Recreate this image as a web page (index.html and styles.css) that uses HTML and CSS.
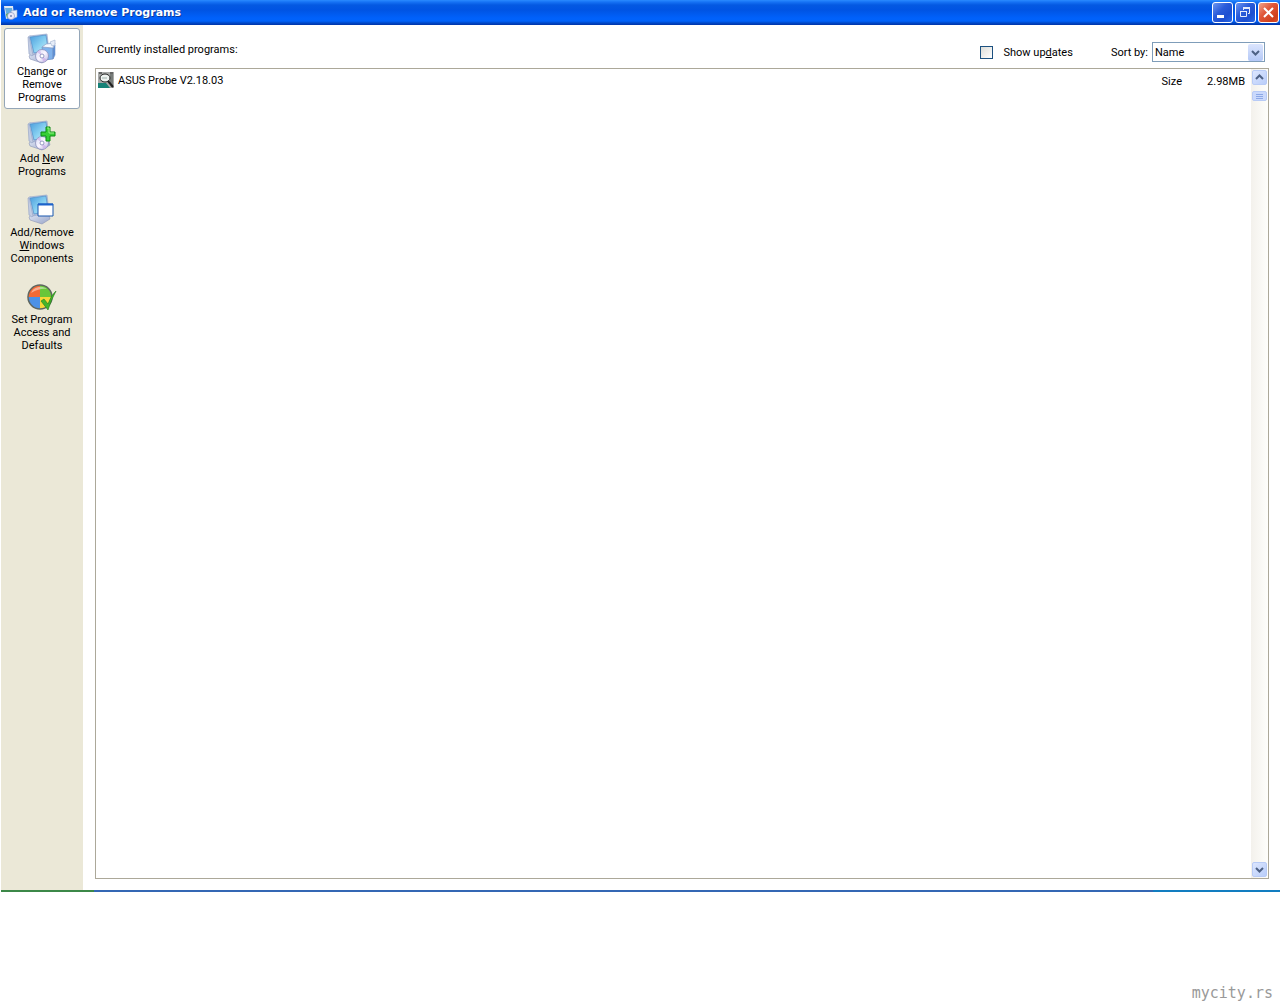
FILE: index.html
```html
<!DOCTYPE html>
<html lang="en">
<head>
    <meta charset="UTF-8">
    <meta name="viewport" content="width=device-width, initial-scale=1.0">
    <title>Add or Remove Programs</title>
    <link rel="stylesheet" href="styles.css">
</head>
<body>

<!-- Shared shapes for the icons -->
<svg class="defs" aria-hidden="true">
    <defs>
        <linearGradient id="screen" x1="0" y1="0" x2="1" y2="1">
            <stop offset="0" stop-color="#4a9cdc"/>
            <stop offset="0.5" stop-color="#83cdf0"/>
            <stop offset="1" stop-color="#c8f1fa"/>
        </linearGradient>
        <linearGradient id="case" x1="0" y1="0" x2="1" y2="1">
            <stop offset="0" stop-color="#e2e8f6"/>
            <stop offset="1" stop-color="#98a5c8"/>
        </linearGradient>
        <linearGradient id="disc-fill" x1="0" y1="0" x2="1" y2="1">
            <stop offset="0" stop-color="#d4dcf4"/>
            <stop offset="0.5" stop-color="#fbf5ff"/>
            <stop offset="1" stop-color="#b3b2de"/>
        </linearGradient>
        <g id="computer">
            <path d="M3 23l5-4 15 2 1 4-8 5-12-4z" fill="url(#case)" stroke="#8b96b6" stroke-width="0.6"/>
            <path d="M2 4l3-1 3 18-2 2-3-2z" fill="#c3cce2" stroke="#8ea0c4" stroke-width="0.6"/>
            <path d="M3 3l18-2 2 17-16 4z" fill="url(#case)" stroke="#8ea0c4" stroke-width="0.6"/>
            <path d="M4 4l16-2 2 15-14 3z" fill="url(#screen)" stroke="#4d8cc8" stroke-width="0.7"/>
        </g>
        <g id="disc">
            <circle cx="16" cy="23" r="6.5" fill="url(#disc-fill)" stroke="#8c8fbb" stroke-width="0.8"/>
            <path d="M16 23l-5-4 3-2zM16 23l5 4-4 2z" fill="#c9a6e8" opacity="0.6"/>
            <circle cx="16" cy="23" r="2" fill="#fff" stroke="#7c83b4" stroke-width="0.8"/>
        </g>
    </defs>
</svg>

<div class="window">
    <header class="title-bar">
        <svg class="title-icon" viewBox="0 0 16 16" aria-hidden="true">
            <path d="M1 1h9l1 10-8 3z" fill="#dfe8f3"/>
            <path d="M2 3h7l1 7-6 2z" fill="#66aee0"/>
            <path d="M3 9l3-1 1 4-3 1z" fill="#53a84f"/>
            <path d="M8 6l6-1v7l-5 2z" fill="#e8effa" stroke="#8fa8d0" stroke-width="0.6"/>
            <circle cx="8" cy="11" r="3.6" fill="#e9e7f8" stroke="#8490bb" stroke-width="0.6"/>
            <circle cx="8" cy="11" r="1" fill="#7684b5"/>
        </svg>
        <h1>Add or Remove Programs</h1>
        <div class="window-buttons">
            <button type="button" aria-label="Minimize">
                <svg viewBox="0 0 19 19"><path d="M4 13.500h7" stroke="#fff" stroke-width="3"/></svg>
            </button>
            <button type="button" aria-label="Restore">
                <svg viewBox="0 0 19 19" fill="none" stroke="#e4ebfb"><path d="M4.500 8.500h6v5h-6z"/><path d="M4 8.500h7"/><path d="M7.500 7V5.500h6v5H12"/><path d="M7 5h7" stroke-width="2"/></svg>
            </button>
            <button type="button" class="close" aria-label="Close">
                <svg viewBox="0 0 19 19"><path d="M5 5l9 9M14 5l-9 9" stroke="#fff" stroke-width="2"/></svg>
            </button>
        </div>
    </header>

    <div class="content">
        <nav class="sidebar">
            <button type="button" class="task active">
                <svg viewBox="0 0 32 32" aria-hidden="true">
                    <use href="#computer"/>
                    <path d="M16 14l11 1v11l-9 1z" fill="#7fb2ec" stroke="#6f92c8" stroke-width="0.8"/>
                    <path d="M27 15l2-3v10l-2 4z" fill="#5b8fd6" stroke="#6f92c8" stroke-width="0.6"/>
                    <path d="M16 14l4-3 9-1-2 5z" fill="#f5f9ff" stroke="#8fa6cc" stroke-width="0.8"/>
                    <path d="M24 9l5-2v5l-3 1z" fill="#e6edf8" stroke="#a0b0cc" stroke-width="0.6"/>
                    <use href="#disc"/>
                </svg>
                <span>C<u>h</u>ange or Remove Programs</span>
            </button>
            <button type="button" class="task">
                <svg viewBox="0 0 32 32" aria-hidden="true">
                    <use href="#computer"/>
                    <use href="#disc"/>
                    <path d="M20 7h4v5h5v4h-5v5h-4v-5h-5v-4h5z" fill="#35cf35" stroke="#0d8a14"/>
                    <path d="M21 8h2v5h5" fill="none" stroke="#9df08c"/>
                </svg>
                <span>Add <u>N</u>ew Programs</span>
            </button>
            <button type="button" class="task">
                <svg viewBox="0 0 32 32" aria-hidden="true">
                    <use href="#computer"/>
                    <path d="M12 10h15v12H12z" fill="#fff" stroke="#1956ae"/>
                    <path d="M12 10.500h15" stroke="#1c62cc" stroke-width="2"/>
                </svg>
                <span>Add/Remove <u>W</u>indows Components</span>
            </button>
            <button type="button" class="task">
                <svg viewBox="0 0 32 32" aria-hidden="true">
                    <path d="M14 4A12 12 0 0 0 2 16h12z" fill="#f36a35"/>
                    <path d="M14 4a12 12 0 0 1 12 12H14z" fill="#69c639"/>
                    <path d="M2 16a12 12 0 0 0 12 12V16z" fill="#4c91e6"/>
                    <path d="M26 16a12 12 0 0 1-12 12V16z" fill="#f8d837"/>
                    <path d="M5 12a10 9 0 0 1 16-4Q14 7 5 12z" fill="#fff" opacity="0.45"/>
                    <circle cx="14" cy="16" r="12" fill="none" stroke="#5e6660" stroke-width="1.500"/>
                    <path d="M15 20l3-2 4 5q3-9 8-13-5 9-8 19z" fill="#43b52b" stroke="#247c19" stroke-width="0.6"/>
                </svg>
                <span>Set Program Access and Defaults</span>
            </button>
        </nav>

        <main class="main">
            <div class="toolbar">
                <h2>Currently installed programs:</h2>
                <label class="updates"><input type="checkbox"><span>Show up<u>d</u>ates</span></label>
                <label for="sortBy">Sort by:</label>
                <div class="select">
                    <select id="sortBy">
                        <option>Name</option>
                        <option>Size</option>
                        <option>Frequency of Use</option>
                        <option>Date Last Used</option>
                    </select>
                    <svg viewBox="0 0 15 17" aria-hidden="true"><path d="M4 7l3.500 3.500L11 7" fill="none" stroke="#4d6185" stroke-width="2"/></svg>
                </div>
            </div>

            <div class="program-list">
                <ul class="programs">
                    <li>
                        <svg viewBox="0 0 16 16" aria-hidden="true">
                            <path d="M0 0h16v16H0z" fill="#a8aaa9"/>
                            <path d="M0 11h8l4 5H0z" fill="#168277"/>
                            <path d="M12 2h3v13h-2l-1-3z" fill="#777c7a"/>
                            <path d="M1 1h3M12 1h3" stroke="#222"/>
                            <ellipse cx="7" cy="6" rx="5" ry="4" fill="#eef3f1" stroke="#222"/>
                            <path d="M4 6h5" stroke="#9eb1ac"/>
                            <path d="M10 9l5 6" stroke="#222" stroke-width="2"/>
                        </svg>
                        <span class="name">ASUS Probe V2.18.03</span>
                        <span class="detail">Size</span>
                        <span class="detail size">2.98MB</span>
                    </li>
                </ul>
                <div class="scrollbar">
                    <button type="button" aria-label="Scroll up">
                        <svg viewBox="0 0 13 13"><path d="M3 8l3.500-3.500L10 8" fill="none" stroke="#4d6185" stroke-width="2"/></svg>
                    </button>
                    <div class="thumb"></div>
                    <button type="button" class="down" aria-label="Scroll down">
                        <svg viewBox="0 0 13 13"><path d="M3 5l3.500 3.500L10 5" fill="none" stroke="#4d6185" stroke-width="2"/></svg>
                    </button>
                </div>
            </div>
        </main>
    </div>

    <!-- Top edge of the taskbar -->
    <div class="taskbar-edge">
        <div class="start"></div>
        <div class="tasks"></div>
        <div class="tray"></div>
    </div>
</div>

<footer>mycity.rs</footer>

</body>
</html>
```
FILE: styles.css
```css
* {
    box-sizing: border-box;
}

body {
    margin: 0;
    min-height: 100vh;
    display: flex;
    flex-direction: column;
    background-color: #fff;
    color: #000;
    font-family: Roboto, Tahoma, sans-serif;
    font-size: 11px;
    line-height: 13px;
}

button {
    padding: 0;
    font: inherit;
    color: inherit;
}

h1,
h2 {
    margin: 0;
    font-size: 11px;
}

svg {
    display: block;
    flex: none;
}

.defs {
    position: absolute;
    width: 0;
    height: 0;
}

.window {
    flex: 1;
    display: flex;
    flex-direction: column;
    padding-left: 1px;
}

/* Title bar */
.title-bar {
    display: flex;
    align-items: center;
    gap: 4px;
    height: 25px;
    padding: 0 1px 0 2px;
    background: linear-gradient(#2a8bff 0, #1673f5 2px, #0459e2 5px, #0054e3 10px, #0061fb 18px, #0062fa 21px, #0048c8 23px, #0034a8 25px);
    color: #fff;
}

.title-bar h1 {
    flex: 1;
    font-family: "DejaVu Sans", Verdana, sans-serif;
    text-shadow: 1px 1px #0a3a9c;
}

.title-icon {
    width: 16px;
    height: 16px;
}

.window-buttons {
    display: flex;
    gap: 2px;
}

.window-buttons button {
    width: 21px;
    height: 21px;
    border: 1px solid #fff;
    border-radius: 3px;
    background: linear-gradient(135deg, #6e96f0, #2a5cda 40%, #1d4fd0 70%, #2768e8);
}

.window-buttons .close {
    background: linear-gradient(135deg, #f0a48c, #e0583a 40%, #cf3f1c 80%, #d9512c);
}

.window-buttons svg {
    width: 19px;
    height: 19px;
}

.content {
    flex: 1;
    display: flex;
}

/* Task buttons on the left */
.sidebar {
    width: 82px;
    padding: 3px;
    display: flex;
    flex-direction: column;
    gap: 6px;
    background-color: #ebe8d7;
}

.task {
    display: flex;
    flex-direction: column;
    align-items: center;
    padding: 4px;
    border: 1px solid transparent;
    border-radius: 3px;
    background: none;
    text-align: center;
}

.task.active {
    border-color: #94a6b8;
    background-color: #fff;
}

.task svg {
    width: 32px;
    height: 32px;
}

/* Right part */
.main {
    flex: 1;
    display: flex;
    flex-direction: column;
    padding: 17px 11px 11px 12px;
}

.toolbar {
    display: flex;
    align-items: center;
    height: 20px;
    margin: 0 4px 6px 2px;
}

.toolbar h2 {
    flex: 1;
    align-self: flex-start;
    font-weight: normal;
    line-height: 16px;
}

.updates {
    display: flex;
    align-items: center;
    gap: 10px;
    margin-right: 38px;
}

.updates input {
    appearance: none;
    width: 13px;
    height: 13px;
    margin: 0;
    border: 1px solid #1c5180;
    background: linear-gradient(135deg, #dcdcd7, #fff);
}

.select {
    display: flex;
    align-items: center;
    width: 113px;
    height: 20px;
    margin-left: 4px;
    padding-right: 1px;
    border: 1px solid #7f9db9;
}

.select select {
    appearance: none;
    flex: 1;
    min-width: 0;
    padding: 0 2px;
    border: none;
    background: none;
    font: inherit;
    color: inherit;
}

.select svg {
    width: 15px;
    height: 17px;
    border-radius: 2px;
    background: linear-gradient(#dbe5fe, #b4c8f6);
}

.program-list {
    flex: 1;
    display: flex;
    border: 1px solid #aca899;
}

.programs {
    flex: 1;
    margin: 0;
    padding: 3px 6px 3px 2px;
    list-style-type: none;
}

.programs li {
    display: flex;
    align-items: center;
    gap: 4px;
}

.programs svg {
    width: 16px;
    height: 16px;
}

.programs .name {
    flex: 1;
}

.programs .detail {
    align-self: flex-end;
}

.programs .size {
    width: 59px;
    text-align: right;
}

.scrollbar {
    width: 17px;
    display: flex;
    flex-direction: column;
    padding: 1px;
    background: linear-gradient(90deg, #f3f1ec, #fefefb);
}

.scrollbar button {
    width: 15px;
    height: 15px;
    border: 1px solid #b8cbf6;
    border-radius: 2px;
    background: linear-gradient(135deg, #dce6fe, #b9cdf9);
}

.scrollbar svg {
    width: 13px;
    height: 13px;
}

.scrollbar .down {
    margin-top: auto;
}

.thumb {
    height: 10px;
    margin-top: 6px;
    border: 1px solid #b8cbf6;
    border-radius: 2px;
    background: repeating-linear-gradient(#cad9fc 0, #cad9fc 1px, #8ca8e6 1px, #8ca8e6 2px) center / 7px 7px no-repeat #cad9fc;
}

.taskbar-edge {
    display: flex;
    height: 2px;
}

.start {
    width: 93px;
    background-color: #3c8848;
}

.tasks {
    flex: 1;
    background-color: #3467b4;
}

.tray {
    width: 127px;
    background-color: #127dc0;
}

footer {
    height: 113px;
    padding: 0 7px 4px;
    display: flex;
    align-items: flex-end;
    justify-content: flex-end;
    color: #999;
    font-family: "DejaVu Sans Mono", monospace;
    font-size: 15px;
    line-height: 15px;
}
```
